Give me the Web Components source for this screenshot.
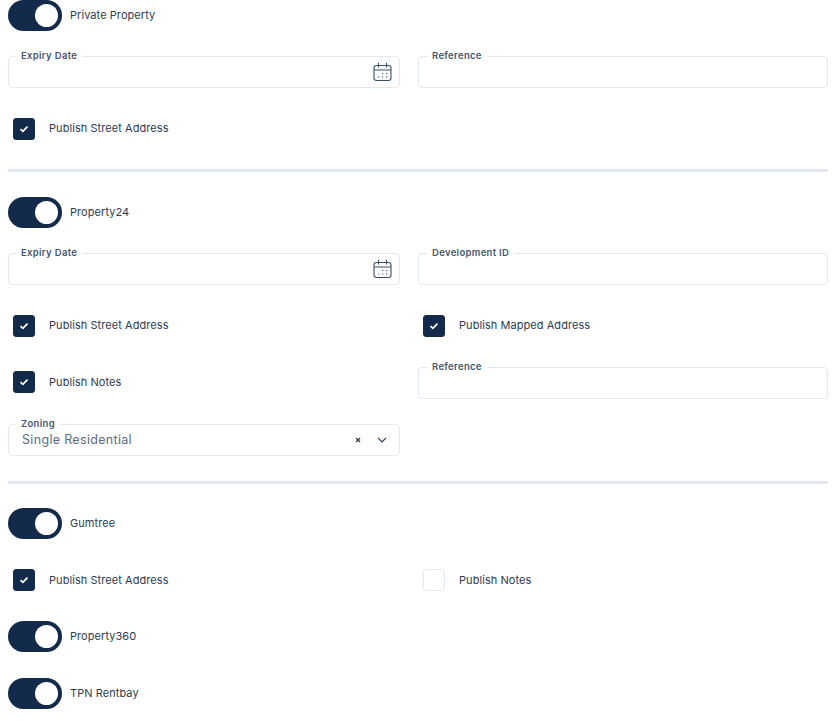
<!DOCTYPE html>
<html>
<head>
<meta charset="utf-8">
<title>Portals</title>
<style>
  html, body { margin: 0; background: #fff; overflow: hidden; }
  body { font-family: Inter, "Liberation Sans", sans-serif; color: #2d3b53; }
</style>
</head>
<body>
<portal-form>
  <form-row>
    <toggle-switch on>Private Property</toggle-switch>
  </form-row>
  <form-row>
    <text-field label="Expiry Date" calendar></text-field>
    <text-field label="Reference" style="--label-left:8px"></text-field>
  </form-row>
  <form-row style="height:57px">
    <check-box checked>Publish Street Address</check-box>
  </form-row>
  <form-divider style="height:27.5px"></form-divider>
  <form-row>
    <toggle-switch on>Property24</toggle-switch>
  </form-row>
  <form-row>
    <text-field label="Expiry Date" calendar></text-field>
    <text-field label="Development ID" style="--label-left:8px"></text-field>
  </form-row>
  <form-row>
    <check-box checked>Publish Street Address</check-box>
    <check-box checked>Publish Mapped Address</check-box>
  </form-row>
  <form-row>
    <check-box checked>Publish Notes</check-box>
    <text-field label="Reference" style="--label-left:8px;margin-top:2px"></text-field>
  </form-row>
  <form-row style="height:58px">
    <select-field label="Zoning" value="Single Residential"></select-field>
  </form-row>
  <form-divider></form-divider>
  <form-row>
    <toggle-switch on>Gumtree</toggle-switch>
  </form-row>
  <form-row>
    <check-box checked>Publish Street Address</check-box>
    <check-box>Publish Notes</check-box>
  </form-row>
  <form-row>
    <toggle-switch on>Property360</toggle-switch>
  </form-row>
  <form-row>
    <toggle-switch on>TPN Rentbay</toggle-switch>
  </form-row>
</portal-form>

<script>
const labelFont = `font: 400 11px/16px Inter, "Liberation Sans", sans-serif; letter-spacing: .06px; color: #2d3b53;`;

class PortalForm extends HTMLElement {
    constructor() {
        super();
        this.attachShadow({mode: 'open'}).innerHTML = `<style>
          :host { display: block; margin-top: -13px; padding: 0 7px 0 8px; }
        </style><slot></slot>`;
    }
}

class FormRow extends HTMLElement {
    constructor() {
        super();
        this.attachShadow({mode: 'open'}).innerHTML = `<style>
          :host { display: grid; grid-template-columns: 392px 410px; column-gap: 18px; height: 56.5px; align-items: center; }
        </style><slot></slot>`;
    }
}

class FormDivider extends HTMLElement {
    constructor() {
        super();
        this.attachShadow({mode: 'open'}).innerHTML = `<style>
          :host { display: flex; align-items: center; height: 27px; }
          div { flex: 1; height: 3px; background: #e2e8f0; }
        </style><div></div>`;
    }
}

class ToggleSwitch extends HTMLElement {
    constructor() {
        super();
        this.attachShadow({mode: 'open'}).innerHTML = `<style>
          :host { display: flex; align-items: center; gap: 8px; ${labelFont} }
          .track { width: 54px; height: 31px; border-radius: 16px; background: #132a4b; display: flex; align-items: center; justify-content: flex-end; padding-right: 4px; box-sizing: border-box; }
          .knob { width: 23px; height: 23px; border-radius: 50%; background: #fff; }
          span { margin-top: -1px; }
        </style><div class="track"><div class="knob"></div></div><span><slot></slot></span>`;
    }
}

class CheckBox extends HTMLElement {
    constructor() {
        super();
        const tick = this.hasAttribute('checked')
            ? `<svg width="10" height="8" viewBox="0 0 10 8"><path d="M1.5 4.2 L3.9 6.4 L8.5 1.6" fill="none" stroke="#fff" stroke-width="1.7"/></svg>`
            : '';
        this.attachShadow({mode: 'open'}).innerHTML = `<style>
          :host { display: flex; align-items: center; gap: 14px; padding-left: 5px; ${labelFont} }
          .box { width: 22px; height: 22px; border-radius: 3px; box-sizing: border-box; display: flex; align-items: center; justify-content: center; border: 1px solid #e2e8f0; }
          .box.on { background: #132a4b; border-color: #132a4b; }
          span { margin-top: -1px; }
        </style><div class="box ${tick ? 'on' : ''}">${tick}</div><span><slot></slot></span>`;
    }
}

const fieldStyle = `
  :host { display: block; position: relative; height: 32px; border: 1px solid #e2e8f0; border-radius: 4px; box-sizing: border-box; }
  label { position: absolute; left: var(--label-left, 7px); top: -8px; padding: 0 5px; background: #fff; font: 600 9.5px/14px Inter, "Liberation Sans", sans-serif; letter-spacing: .32px; color: #46556d; white-space: nowrap; }
`;

class TextField extends HTMLElement {
    constructor() {
        super();
        const icon = this.hasAttribute('calendar')
            ? `<svg width="19" height="20" viewBox="0 0 19 20" fill="none" stroke="#3d4e68" stroke-width="1.1">
                <rect x="1" y="3.5" width="17" height="15" rx="2.5"/>
                <path d="M1 8 H18 M5.5 .8 V5.5 M13.5 .8 V5.5"/>
                <path d="M9 11.5h1.2M13 11.5h1.2M5 15h1.2M9 15h1.2M13 15h1.2" stroke-width="1.2"/>
              </svg>`
            : '';
        this.attachShadow({mode: 'open'}).innerHTML = `<style>${fieldStyle}
          .body { display: flex; align-items: center; justify-content: flex-end; height: 100%; padding-right: 7px; }
        </style><label>${this.getAttribute('label')}</label><div class="body">${icon}</div>`;
    }
}

class SelectField extends HTMLElement {
    constructor() {
        super();
        this.attachShadow({mode: 'open'}).innerHTML = `<style>${fieldStyle}
          .body { display: flex; align-items: center; height: 100%; padding: 0 12px 0 13px; gap: 15px; }
          .value { flex: 1; font: 400 12.5px/18px Inter, "Liberation Sans", sans-serif; color: #5c6b82; letter-spacing: .32px; }
          .clear { margin-right: 1.5px; }
        </style><label>${this.getAttribute('label')}</label>
        <div class="body">
          <span class="value">${this.getAttribute('value')}</span>
          <svg class="clear" width="6" height="6" viewBox="0 0 6 6"><path d="M1 1 L5 5 M5 1 L1 5" stroke="#2d3b53" stroke-width="1.3"/></svg>
          <svg width="10" height="6" viewBox="0 0 10 6"><path d="M1 1 L5 5 L9 1" fill="none" stroke="#2d3b53" stroke-width="1.1"/></svg>
        </div>`;
    }
}

customElements.define('portal-form', PortalForm);
customElements.define('form-row', FormRow);
customElements.define('form-divider', FormDivider);
customElements.define('toggle-switch', ToggleSwitch);
customElements.define('check-box', CheckBox);
customElements.define('text-field', TextField);
customElements.define('select-field', SelectField);
</script>
</body>
</html>
